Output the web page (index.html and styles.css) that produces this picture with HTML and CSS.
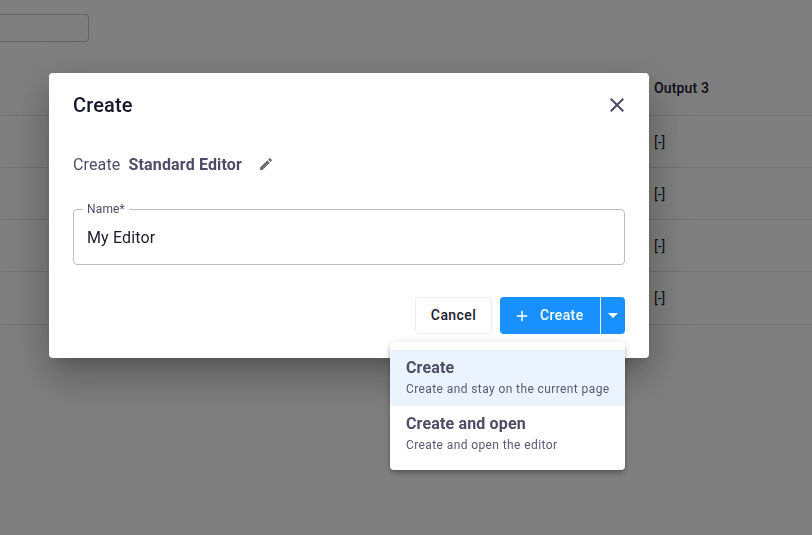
FILE: index.html
```html
<!DOCTYPE html>
<html lang="en">
<head>
  <meta charset="UTF-8">
  <title>Create</title>
  <link rel="stylesheet" href="styles.css">
</head>
<body>

  <!-- Page behind the dialog -->
  <div class="page">
    <div class="search"></div>
    <div class="row row-head">Output 3</div>
    <div class="row">[-]</div>
    <div class="row">[-]</div>
    <div class="row">[-]</div>
    <div class="row row-last">[-]</div>
  </div>

  <div class="backdrop"></div>

  <!-- Create dialog -->
  <div class="dialog">
    <div class="dialog-head">
      <h2>Create</h2>
      <svg class="close" width="24" height="24" viewBox="0 0 24 24"><path d="M19 6.41 17.59 5 12 10.59 6.41 5 5 6.41 10.59 12 5 17.59 6.41 19 12 13.41 17.59 19 19 17.59 13.41 12z"/></svg>
    </div>
    <div class="type-line">
      <span class="type-label">Create</span>
      <strong class="type-name">Standard Editor</strong>
      <svg class="edit" width="16" height="16" viewBox="0 0 24 24"><path d="M3 17.25V21h3.75L17.81 9.94l-3.75-3.75L3 17.25zM20.71 7.04a1 1 0 0 0 0-1.41l-2.34-2.34a1 1 0 0 0-1.41 0l-1.83 1.83 3.75 3.75 1.83-1.83z"/></svg>
    </div>
    <fieldset class="field">
      <legend>Name*</legend>
      <input class="field-input" type="text" value="My Editor">
    </fieldset>
    <div class="actions">
      <button class="btn btn-cancel">Cancel</button>
      <div class="split">
        <button class="btn btn-create">
          <svg width="18" height="18" viewBox="0 0 24 24"><path d="M19 13h-6v6h-2v-6H5v-2h6V5h2v6h6v2z"/></svg>
          Create
        </button>
        <button class="btn btn-caret"><span class="caret"></span></button>
      </div>
    </div>
  </div>

  <!-- Split button menu -->
  <div class="menu">
    <div class="menu-item active">
      <div class="menu-title">Create</div>
      <div class="menu-sub">Create and stay on the current page</div>
    </div>
    <div class="menu-item">
      <div class="menu-title">Create and open</div>
      <div class="menu-sub">Create and open the editor</div>
    </div>
  </div>

</body>
</html>
```

FILE: styles.css
```css
* {
  box-sizing: border-box;
}

html, body {
  height: 100%;
}

body {
  margin: 0;
  overflow: hidden;
  background-color: #fff;
  font-family: Roboto, sans-serif;
  color: #1a1a2e;
}

.page {
  padding-top: 14px;
}

.search {
  width: 89px;
  height: 28px;
  border: 1px solid #c4c4c4;
  border-left: none;
  border-radius: 0 4px 4px 0;
}

.row {
  height: 52px;
  padding: 16px 0 0 654px;
  border-bottom: 1px solid #e0e0e0;
  font-size: 14px;
  line-height: 20px;
}

.row-head {
  height: 74px;
  padding-top: 36px;
  font-weight: 500;
  letter-spacing: 0.15px;
}

.row-last {
  height: 53px;
}

.backdrop {
  position: fixed;
  top: 0;
  right: 0;
  bottom: 0;
  left: 0;
  background-color: rgba(0, 0, 0, 0.5);
}

.dialog {
  position: fixed;
  top: 73px;
  left: 49px;
  width: 600px;
  height: 285px;
  padding: 0 24px;
  background-color: #fff;
  border-radius: 4px;
  box-shadow: 0 11px 15px -7px rgba(0, 0, 0, 0.2), 0 24px 38px 3px rgba(0, 0, 0, 0.14), 0 9px 46px 8px rgba(0, 0, 0, 0.12);
}

.dialog-head {
  display: flex;
  justify-content: space-between;
  align-items: center;
  height: 64px;
}

.dialog-head h2 {
  margin: 0;
  font-size: 20px;
  font-weight: 500;
  letter-spacing: 0.15px;
  color: #16162a;
}

.close {
  margin-right: -4px;
  fill: #4f4b66;
}

.type-line {
  display: flex;
  align-items: center;
  height: 24px;
  margin-top: 15px;
  font-size: 16px;
  letter-spacing: 0.15px;
  color: #4f4b66;
}

.type-name {
  margin-left: 8px;
  font-weight: 700;
}

.edit {
  margin-left: 16px;
  fill: #6e6e6e;
}

.field {
  height: 64px;
  margin: 25px 0 0;
  padding: 0 9px;
  border: 1px solid #bdbdbd;
  border-radius: 4px;
}

.field legend {
  padding: 0 4px;
  font-size: 12px;
  line-height: 16px;
  letter-spacing: 0.15px;
  color: #4f4b66;
}

.field-input {
  display: block;
  width: 100%;
  height: 40px;
  padding: 0 4px;
  border: none;
  outline: none;
  font-family: Roboto, sans-serif;
  font-size: 16px;
  letter-spacing: 0.15px;
  color: #1a1a2e;
}

.actions {
  display: flex;
  justify-content: flex-end;
  gap: 8px;
  margin-top: 32px;
}

.btn {
  height: 37px;
  padding-bottom: 2px;
  border: none;
  font-family: Roboto, sans-serif;
  font-size: 14px;
  font-weight: 500;
  letter-spacing: 0.4px;
}

.btn-cancel {
  width: 77px;
  background-color: #fff;
  border: 1px solid #ececf0;
  border-radius: 4px;
  color: #1a1a2e;
}

.split {
  display: flex;
}

.btn-create {
  display: flex;
  align-items: center;
  gap: 9px;
  width: 100px;
  padding: 0 0 1px 13px;
  background-color: #1890ff;
  border-radius: 4px 0 0 4px;
  color: #fff;
}

.btn-create svg {
  fill: #fff;
  margin-top: 2px;
}

.btn-caret {
  display: flex;
  justify-content: center;
  align-items: center;
  width: 25px;
  padding: 0;
  background-color: #1890ff;
  border-left: 1px solid #e6eef6;
  border-radius: 0 4px 4px 0;
}

.caret {
  width: 0;
  height: 0;
  border-top: 5px solid #fff;
  border-left: 5px solid transparent;
  border-right: 5px solid transparent;
}

.menu {
  position: fixed;
  top: 342px;
  left: 390px;
  width: 235px;
  height: 128px;
  padding: 8px 0;
  background-color: #fff;
  border-radius: 4px;
  box-shadow: 0 2px 4px -1px rgba(0, 0, 0, 0.2), 0 4px 5px rgba(0, 0, 0, 0.14), 0 1px 10px rgba(0, 0, 0, 0.12);
}

.menu-item {
  height: 56px;
  padding: 8px 16px;
}

.menu-item.active {
  background-color: #ebf4fe;
}

.menu-title {
  font-size: 16px;
  line-height: 20px;
  font-weight: 700;
  letter-spacing: 0.15px;
  color: #4f4b66;
}

.menu-sub {
  margin-top: 3px;
  font-size: 12px;
  line-height: 16px;
  letter-spacing: 0.4px;
  white-space: nowrap;
  color: #5c5873;
}
```
